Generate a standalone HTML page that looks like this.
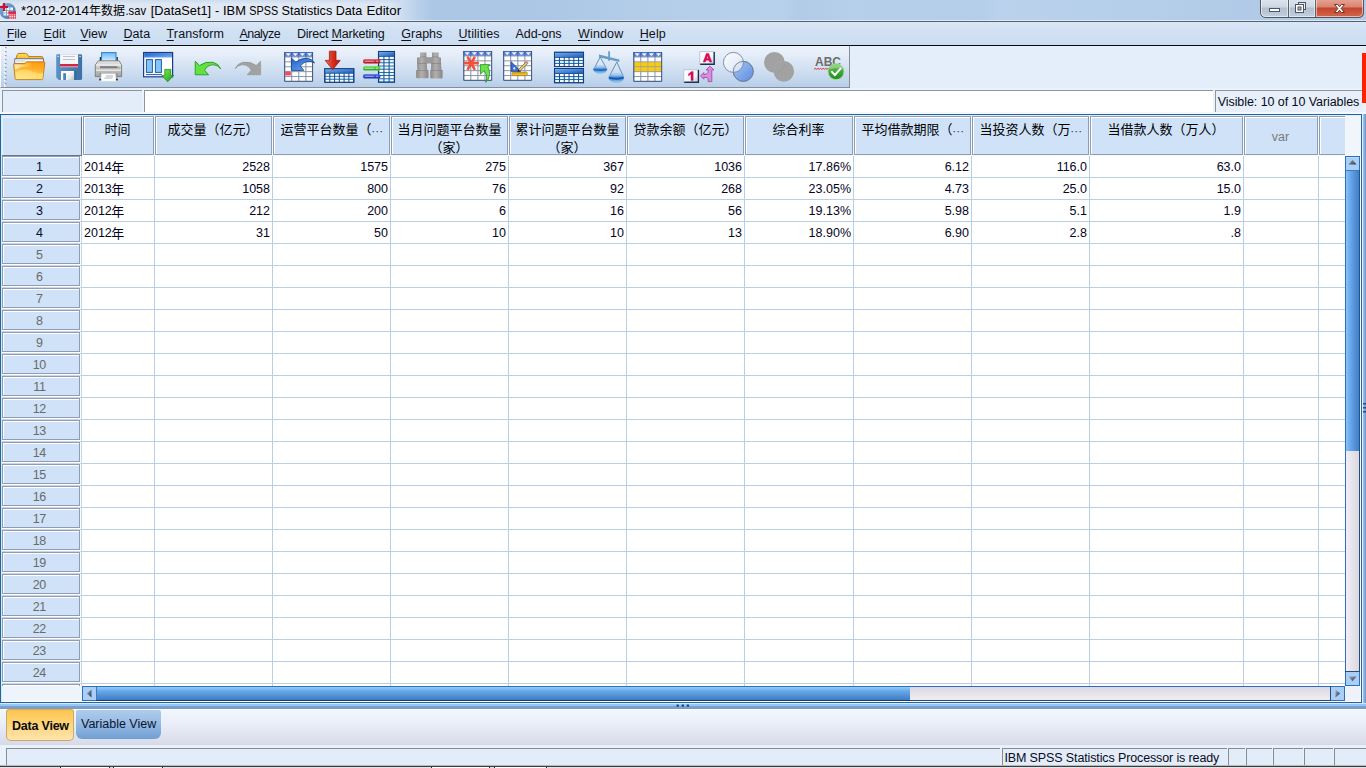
<!DOCTYPE html>
<html><head><meta charset="utf-8"><title>IBM SPSS Statistics Data Editor</title>
<style>
html,body{margin:0;padding:0}
body{width:1366px;height:768px;overflow:hidden;position:relative;background:#e6effa;
 font-family:"Liberation Sans",sans-serif;font-size:12.5px;color:#000;line-height:14px}
div{position:absolute;box-sizing:border-box}
.ov{position:absolute;left:0;top:0;pointer-events:none;font-family:"Liberation Sans",sans-serif;font-size:12.5px}
.ov text{white-space:pre}
.ov text.cj{font-family:"Liberation Sans","Noto Sans CJK SC",sans-serif}
.u{text-decoration:underline;text-decoration-thickness:1px;text-underline-offset:1.5px;text-decoration-skip-ink:none}
.hc{background:#cfe2f8;border:1px solid #8d9db3;box-shadow:inset 1px 1px 0 #fff}
.rh{background:#cfe2f8;border:1px solid #8d9db3;box-shadow:inset 1px 1px 0 #fff}

</style></head>
<body>
<svg width="0" height="0" style="position:absolute"><defs>
<linearGradient id="thv" x1="0" y1="0" x2="1" y2="0"><stop offset="0" stop-color="#86c4fb"/><stop offset=".35" stop-color="#6aa5e6"/><stop offset="1" stop-color="#3d7fc6"/></linearGradient>
<linearGradient id="thh" x1="0" y1="0" x2="0" y2="1"><stop offset="0" stop-color="#8fd0ff"/><stop offset=".3" stop-color="#6aa8e8"/><stop offset="1" stop-color="#3b7cc4"/></linearGradient>
<linearGradient id="trv" x1="0" y1="0" x2="1" y2="0"><stop offset="0" stop-color="#f1eff4"/><stop offset="1" stop-color="#dad7e1"/></linearGradient>
<linearGradient id="trh" x1="0" y1="0" x2="0" y2="1"><stop offset="0" stop-color="#dbd8e2"/><stop offset="1" stop-color="#efedf3"/></linearGradient>
<linearGradient id="arr" x1="0" y1="0" x2="1" y2="1"><stop offset="0" stop-color="#b0b0b0"/><stop offset="1" stop-color="#20324e"/></linearGradient>

<linearGradient id="gh" x1="0" y1="0" x2="0" y2="1"><stop offset="0" stop-color="#4468b8"/><stop offset="1" stop-color="#7a9ade"/></linearGradient>
<linearGradient id="bh" x1="0" y1="0" x2="1" y2="1"><stop offset="0" stop-color="#78b0ec"/><stop offset="1" stop-color="#1c5cbc"/></linearGradient>
<linearGradient id="fol1" x1="0" y1="0" x2="0" y2="1"><stop offset="0" stop-color="#ffe05a"/><stop offset="1" stop-color="#f0a818"/></linearGradient>
<linearGradient id="fol2" x1="0.700" y1="0" x2="0.400" y2="1"><stop offset="0" stop-color="#ff9810"/><stop offset=".45" stop-color="#ffb52e"/><stop offset="1" stop-color="#ffe880"/></linearGradient>
<linearGradient id="fol3" x1="0" y1="0" x2="1" y2="0"><stop offset="0" stop-color="#fff6d0" stop-opacity=".95"/><stop offset=".5" stop-color="#ffe9a0" stop-opacity=".5"/><stop offset="1" stop-color="#ffd060" stop-opacity="0"/></linearGradient>
<linearGradient id="shut" x1="0" y1="0" x2="1" y2="1"><stop offset="0" stop-color="#ffffff"/><stop offset=".5" stop-color="#ededed"/><stop offset="1" stop-color="#bdbdbd"/></linearGradient>
<linearGradient id="grn" x1="0" y1="0" x2="1" y2="1"><stop offset="0" stop-color="#7cf04e"/><stop offset="1" stop-color="#1f9c1f"/></linearGradient>
<linearGradient id="redg" x1="0" y1="0" x2="1" y2="0"><stop offset="0" stop-color="#f27058"/><stop offset=".5" stop-color="#d83020"/><stop offset="1" stop-color="#b81408"/></linearGradient>
<linearGradient id="blug" x1="0" y1="0" x2="1" y2="1"><stop offset="0" stop-color="#1d5fc8"/><stop offset="1" stop-color="#78b0f4"/></linearGradient>
<linearGradient id="pap" x1="0" y1="0" x2="0" y2="1"><stop offset="0" stop-color="#6cbaf4"/><stop offset="1" stop-color="#eef7fe"/></linearGradient>
<linearGradient id="prn" x1="0" y1="0" x2="0" y2="1"><stop offset="0" stop-color="#e4e4e4"/><stop offset=".5" stop-color="#c4c4c4"/><stop offset="1" stop-color="#a4a4a4"/></linearGradient>
<linearGradient id="venb" x1="0" y1="0" x2="1" y2="1"><stop offset="0" stop-color="#a8c4f2"/><stop offset="1" stop-color="#5a8ee4"/></linearGradient>
<linearGradient id="venw" x1="0" y1="0" x2="1" y2="1"><stop offset="0" stop-color="#ffffff"/><stop offset="1" stop-color="#d8e4f4"/></linearGradient>
<linearGradient id="chk" x1="0" y1="0" x2="0" y2="1"><stop offset="0" stop-color="#6cc45c"/><stop offset="1" stop-color="#1f8a1f"/></linearGradient>
<linearGradient id="boxg" x1="0" y1="0" x2="1" y2="1"><stop offset="0" stop-color="#ffffff"/><stop offset=".6" stop-color="#f4f7fb"/><stop offset="1" stop-color="#b9cbe2"/></linearGradient>
<linearGradient id="pan" x1="0" y1="0" x2="0" y2="1"><stop offset="0" stop-color="#d6ecfa"/><stop offset=".5" stop-color="#2a78d0"/><stop offset="1" stop-color="#9ed2f4"/></linearGradient>
<linearGradient id="flp" x1="0" y1="0" x2="1" y2="0"><stop offset="0" stop-color="#5a92c6"/><stop offset="1" stop-color="#3c70a6"/></linearGradient>
<linearGradient id="bin" x1="0" y1="0" x2="1" y2="0"><stop offset="0" stop-color="#8c8a88"/><stop offset=".45" stop-color="#b2b0ae"/><stop offset="1" stop-color="#8a8886"/></linearGradient></defs></svg>
<div style="left:0px;top:0px;width:1366px;height:21px;background:linear-gradient(90deg,#dde6f2 0,#e0e9f4 330px,#dce6f3 390px,#b9d0ea 418px,#abc7e5 432px,#abc7e5 540px,#b3cde9 640px,#b8d1eb 780px,#b1cbe8 800px,#b6cfea 850px,#b4cde9 980px,#bad2ec 1000px,#b5cee9 1150px,#b0cae7 1250px,#b3cce8 1366px)"></div>
<div style="left:0px;top:0px;width:400px;height:4px;background:linear-gradient(rgba(190,210,234,.55),rgba(190,210,234,0))"></div>
<div style="left:0px;top:20px;width:1366px;height:1px;background:rgba(236,243,252,.75)"></div>
<div style="left:0px;top:21px;width:1366px;height:1px;background:#56616e"></div>
<div style="left:0px;top:22px;width:1366px;height:23px;background:linear-gradient(#dae7f6 0,#d2e2f4 30%,#cbddf1 100%)"></div>
<div style="left:0px;top:45px;width:1366px;height:1px;background:#0a0a0a"></div>
<div style="left:0px;top:46px;width:850px;height:42px;background:linear-gradient(#edf3fb 0,#e3ecf8 25%,#cfdff1 60%,#b7cee9 100%);border-right:1px solid #878e98;border-bottom:1px solid #878e98;border-left:1px solid #fff"></div>
<div style="left:850px;top:46px;width:516px;height:42px;background:#e4eefb"></div>
<div style="left:0px;top:88px;width:1366px;height:26px;background:#eaf2fc"></div>
<div style="left:2px;top:90px;width:140px;height:22px;background:#e3edfa;border-top:1px solid #8f959d;border-left:1px solid #8f959d"></div>
<div style="left:144px;top:90px;width:1069px;height:22px;background:#fff;border-top:1px solid #8f959d;border-left:1px solid #8f959d"></div>
<div style="left:1215px;top:90px;width:147px;height:22px;background:#e6effa;border-top:1px solid #8f959d;border-left:1px solid #8f959d"></div>
<div style="left:0px;top:112px;width:1366px;height:2px;background:#f3f8fe"></div>
<div style="left:1362px;top:53px;width:4px;height:50px;background:#ff2200"></div>
<div style="left:0px;top:114px;width:1362px;height:589px;background:#fff;border:1px solid #2f6096"></div>
<div style="left:1px;top:115px;width:1360px;height:1px;background:#d6f0ff"></div>
<div style="left:1px;top:115px;width:1px;height:587px;background:#c8f1ff"></div>
<div style="left:1362px;top:114px;width:1px;height:590px;background:#dff1ff"></div>
<div style="left:1363px;top:114px;width:3px;height:594px;background:linear-gradient(90deg,#9cc4ee,#7ea9da 60%,#6a94c6)"></div>
<div style="left:0px;top:703px;width:1366px;height:1px;background:#c4ebff"></div>
<div style="left:0px;top:704px;width:1366px;height:5px;background:linear-gradient(#97c8fa 0,#93c4f7 38%,#7da2cd 44%,#7b9cc4 100%)"></div>
<div style="left:2px;top:116px;width:1343px;height:40px;background:#f6faff"></div>
<div style="left:2px;top:116px;width:80px;height:40px;background:#cfe2f8;border-right:1px solid #6c7684;border-bottom:1px solid #6c7684;border-top:1px solid #dbe9fa;box-shadow:inset 1px 1px 0 #e4f0fd"></div>
<div class="hc" style="left:83px;top:116px;width:71px;height:39px;"></div>
<div class="hc" style="left:155px;top:116px;width:117px;height:39px;"></div>
<div class="hc" style="left:273px;top:116px;width:117px;height:39px;"></div>
<div class="hc" style="left:391px;top:116px;width:117px;height:39px;"></div>
<div class="hc" style="left:509px;top:116px;width:117px;height:39px;"></div>
<div class="hc" style="left:627px;top:116px;width:117px;height:39px;"></div>
<div class="hc" style="left:745px;top:116px;width:108px;height:39px;"></div>
<div class="hc" style="left:854px;top:116px;width:117px;height:39px;"></div>
<div class="hc" style="left:972px;top:116px;width:117px;height:39px;"></div>
<div class="hc" style="left:1090px;top:116px;width:153px;height:39px;"></div>
<div class="hc" style="left:1244px;top:116px;width:74px;height:39px;"></div>
<div class="hc" style="left:1319px;top:116px;width:26px;height:39px;border-right:none"></div>
<div style="left:1345px;top:116px;width:16px;height:40px;background:#f1f6fc"></div>
<div style="left:154px;top:156px;width:1px;height:530px;background:#b9cee7"></div>
<div style="left:272px;top:156px;width:1px;height:530px;background:#b9cee7"></div>
<div style="left:390px;top:156px;width:1px;height:530px;background:#b9cee7"></div>
<div style="left:508px;top:156px;width:1px;height:530px;background:#b9cee7"></div>
<div style="left:626px;top:156px;width:1px;height:530px;background:#b9cee7"></div>
<div style="left:744px;top:156px;width:1px;height:530px;background:#b9cee7"></div>
<div style="left:853px;top:156px;width:1px;height:530px;background:#b9cee7"></div>
<div style="left:971px;top:156px;width:1px;height:530px;background:#b9cee7"></div>
<div style="left:1089px;top:156px;width:1px;height:530px;background:#b9cee7"></div>
<div style="left:1243px;top:156px;width:1px;height:530px;background:#b9cee7"></div>
<div style="left:1318px;top:156px;width:1px;height:530px;background:#b9cee7"></div>
<div style="left:82px;top:156px;width:1263px;height:530px;background:repeating-linear-gradient(180deg,transparent 0,transparent 21px,#b9cee7 21px,#b9cee7 22px)"></div>
<div style="left:81px;top:156px;width:1px;height:530px;background:#c6d6ea"></div>
<div style="left:2px;top:156px;width:79px;height:530px;background:repeating-linear-gradient(180deg,#fbfdff 0,#fbfdff 21px,#cfd6e0 21px,#cfd6e0 22px)"></div>
<div class="rh" style="left:2px;top:156px;width:78px;height:20px;"></div>
<div class="rh" style="left:2px;top:178px;width:78px;height:20px;"></div>
<div class="rh" style="left:2px;top:200px;width:78px;height:20px;"></div>
<div class="rh" style="left:2px;top:222px;width:78px;height:20px;"></div>
<div class="rh" style="left:2px;top:244px;width:78px;height:20px;"></div>
<div class="rh" style="left:2px;top:266px;width:78px;height:20px;"></div>
<div class="rh" style="left:2px;top:288px;width:78px;height:20px;"></div>
<div class="rh" style="left:2px;top:310px;width:78px;height:20px;"></div>
<div class="rh" style="left:2px;top:332px;width:78px;height:20px;"></div>
<div class="rh" style="left:2px;top:354px;width:78px;height:20px;"></div>
<div class="rh" style="left:2px;top:376px;width:78px;height:20px;"></div>
<div class="rh" style="left:2px;top:398px;width:78px;height:20px;"></div>
<div class="rh" style="left:2px;top:420px;width:78px;height:20px;"></div>
<div class="rh" style="left:2px;top:442px;width:78px;height:20px;"></div>
<div class="rh" style="left:2px;top:464px;width:78px;height:20px;"></div>
<div class="rh" style="left:2px;top:486px;width:78px;height:20px;"></div>
<div class="rh" style="left:2px;top:508px;width:78px;height:20px;"></div>
<div class="rh" style="left:2px;top:530px;width:78px;height:20px;"></div>
<div class="rh" style="left:2px;top:552px;width:78px;height:20px;"></div>
<div class="rh" style="left:2px;top:574px;width:78px;height:20px;"></div>
<div class="rh" style="left:2px;top:596px;width:78px;height:20px;"></div>
<div class="rh" style="left:2px;top:618px;width:78px;height:20px;"></div>
<div class="rh" style="left:2px;top:640px;width:78px;height:20px;"></div>
<div class="rh" style="left:2px;top:662px;width:78px;height:20px;"></div>
<div class="rh" style="left:2px;top:684px;width:78px;height:2px;border-bottom:none;"></div>
<div style="left:0px;top:709px;width:1366px;height:37px;background:linear-gradient(#ffffff 0,#f3f7fd 1px,#f1f5fc 2px,#eaeef8 40%,#dfe2ee 75%,#d6d8e6 100%)"></div>
<div style="left:6px;top:709px;width:68px;height:32px;background:linear-gradient(#fdc54e 0,#ffd272 40%,#ffe4ac 100%);border:1px solid #c6a96b;border-top-color:#d4ad5c;border-radius:3px 3px 5px 5px"></div>
<div style="left:76px;top:710px;width:85px;height:29px;background:linear-gradient(#aecbec 0,#9bbde4 40%,#6f9fd4 100%);border-radius:2px 2px 6px 6px"></div>
<div style="left:0px;top:745px;width:1366px;height:23px;background:#e9f1fb"></div>
<div style="left:6px;top:748px;width:994px;height:18px;background:#e3edfa;border-top:1px solid #868c94;border-left:1px solid #868c94"></div>
<div style="left:1002px;top:748px;width:225px;height:18px;background:#e3edfa;border-top:1px solid #868c94;border-left:1px solid #868c94"></div>
<div style="left:1228px;top:748px;width:17px;height:18px;background:#e3edfa;border-top:1px solid #868c94;border-left:1px solid #868c94"></div>
<div style="left:1246px;top:748px;width:26px;height:18px;background:#e3edfa;border-top:1px solid #868c94;border-left:1px solid #868c94"></div>
<div style="left:1273px;top:748px;width:30px;height:18px;background:#e3edfa;border-top:1px solid #868c94;border-left:1px solid #868c94"></div>
<div style="left:1304px;top:748px;width:29px;height:18px;background:#e3edfa;border-top:1px solid #868c94;border-left:1px solid #868c94"></div>
<div style="left:1334px;top:748px;width:32px;height:18px;background:#e3edfa;border-top:1px solid #868c94;border-left:1px solid #868c94"></div>
<div style="left:0px;top:765px;width:1366px;height:1px;background:#b4b9c0"></div>
<div style="left:0px;top:766px;width:1366px;height:1px;background:#3c3c3c"></div>
<div style="left:0px;top:767px;width:1366px;height:1px;background:#e4e4e4"></div>
<div style="left:60px;top:767px;width:50px;height:1px;background:#fff;border-left:1px solid #2a2a2a;border-right:1px solid #2a2a2a"></div>
<div style="left:113px;top:767px;width:50px;height:1px;background:#fff;border-left:1px solid #2a2a2a;border-right:1px solid #2a2a2a"></div>
<div style="left:431px;top:767px;width:59px;height:1px;background:#fff;border-left:1px solid #2a2a2a;border-right:1px solid #2a2a2a"></div>
<div style="left:494px;top:767px;width:53px;height:1px;background:#fff;border-left:1px solid #2a2a2a;border-right:1px solid #2a2a2a"></div>
<svg class="ov" width="1366" height="768" viewBox="0 0 1366 768">
<text x="21.0" y="15" font-size="12.6" fill="#000" textLength="67.90" lengthAdjust="spacingAndGlyphs">*2012-2014</text>
<text class="cj" x="88.9" y="15.1" font-size="12" fill="#000" textLength="36.2" lengthAdjust="spacing">年数据</text>
<text x="125.5" y="15" font-size="12.6" fill="#000" textLength="20.50" lengthAdjust="spacingAndGlyphs">.sav</text>
<text x="150.8" y="15" font-size="12.6" fill="#000" textLength="60.30" lengthAdjust="spacingAndGlyphs">[DataSet1]</text>
<text x="214.9" y="15" font-size="12.6" fill="#000">-</text>
<text x="223.0" y="15" font-size="12.6" fill="#000" textLength="22.90" lengthAdjust="spacingAndGlyphs">IBM</text>
<text x="249.3" y="15" font-size="12.6" fill="#000" textLength="28.80" lengthAdjust="spacingAndGlyphs">SPSS</text>
<text x="281.5" y="15" font-size="12.6" fill="#000" textLength="50.80" lengthAdjust="spacingAndGlyphs">Statistics</text>
<text x="335.7" y="15" font-size="12.6" fill="#000" textLength="26.60" lengthAdjust="spacingAndGlyphs">Data</text>
<text x="366.4" y="15" font-size="12.6" fill="#000" textLength="34.70" lengthAdjust="spacingAndGlyphs">Editor</text>

<defs>
<linearGradient id="wbg" x1="0" y1="0" x2="0" y2="1"><stop offset="0" stop-color="#dfe6ef"/><stop offset=".45" stop-color="#cdd7e3"/><stop offset=".5" stop-color="#b2bfcf"/><stop offset="1" stop-color="#c3d0df"/></linearGradient>
<linearGradient id="wbr" x1="0" y1="0" x2="0" y2="1"><stop offset="0" stop-color="#e9a99a"/><stop offset=".45" stop-color="#d98370"/><stop offset=".5" stop-color="#c4452d"/><stop offset="1" stop-color="#d6694f"/></linearGradient>
<clipPath id="wbc"><path d="M1260 -2H1364V12Q1364 18 1358 18H1266Q1260 18 1260 12Z"/></clipPath>
</defs>
<g clip-path="url(#wbc)">
<rect x="1260" y="-2" width="56" height="20" fill="url(#wbg)"/>
<rect x="1315" y="-2" width="49" height="20" fill="url(#wbr)"/>
</g>
<path d="M1260.5 -2V12Q1260.5 17.5 1266 17.5H1358Q1363.5 17.5 1363.5 12V-2" fill="none" stroke="#4e5663" stroke-width="1"/>
<path d="M1261.5 -2V12Q1261.5 16.5 1266 16.5H1358Q1362.5 16.5 1362.5 12V-2" fill="none" stroke="rgba(255,255,255,.55)" stroke-width="1"/>
<path d="M1288.5 0V17M1315.5 0V17" stroke="#5a626e" stroke-width="1"/>
<path d="M1289.5 0V16M1287.5 0V16M1314.5 0V16M1316.5 0V16" stroke="rgba(255,255,255,.5)" stroke-width="1"/>
<rect x="1269.5" y="8.5" width="10" height="3" fill="#fff" stroke="#4c5562" stroke-width="1"/>
<g fill="none" stroke="#4c5562">
<rect x="1298.5" y="2.5" width="7" height="7" fill="#e9eef4"/>
<rect x="1295.5" y="4.500" width="8" height="8" fill="#fff"/>
<rect x="1298" y="7" width="3" height="3" fill="#aab6c5" stroke-width="1"/>
</g>
<path d="M1334.500 4.5h3.2l1.800 2.3 1.800-2.300h3.200l-3.400 4 3.400 4h-3.200l-1.800-2.300-1.800 2.300h-3.200l3.400-4z" fill="#fff" stroke="#5c2a22" stroke-width=".9" stroke-linejoin="round"/>


<defs><linearGradient id="aic" x1="0" y1="0" x2="1" y2="1"><stop offset="0" stop-color="#86b4dc"/><stop offset="1" stop-color="#3d6fa8"/></linearGradient></defs>
<circle cx="7.6" cy="11" r="8.100" fill="url(#aic)"/>
<rect x="3.5" y="7.5" width="9.5" height="8" fill="#f4f8fc"/>
<path d="M3.5 10.500h9.500M3.500 13h9.500M6.500 7.500v8M9.700 7.500v8" stroke="#6d95c4" stroke-width=".8"/>
<path d="M4 3v8M0 7h8" stroke="#d0102c" stroke-width="2.200"/>
<rect x="8.500" y="11.500" width="7.500" height="7.500" fill="#e0405a"/>
<rect x="8.500" y="11.500" width="7.500" height="2" fill="#d02848"/>
<path d="M9.300 14.900h6M9.300 16.500h6M9.300 18.100h6" stroke="#fff" stroke-width=".9" stroke-dasharray="1.500 .75"/>

<text x="6.7" y="38" font-size="12.5" fill="#101018" textLength="20.00" lengthAdjust="spacing">File</text>
<text x="43.6" y="38" font-size="12.5" fill="#101018" textLength="21.90" lengthAdjust="spacing">Edit</text>
<text x="80.2" y="38" font-size="12.5" fill="#101018" textLength="26.80" lengthAdjust="spacing">View</text>
<text x="123.5" y="38" font-size="12.5" fill="#101018" textLength="26.60" lengthAdjust="spacing">Data</text>
<text x="166.6" y="38" font-size="12.5" fill="#101018" textLength="57.30" lengthAdjust="spacing">Transform</text>
<text x="239.5" y="38" font-size="12.5" fill="#101018" textLength="41.20" lengthAdjust="spacing">Analyze</text>
<text x="296.9" y="38" font-size="12.5" fill="#101018" textLength="87.80" lengthAdjust="spacing">Direct Marketing</text>
<text x="401.3" y="38" font-size="12.5" fill="#101018" textLength="41.00" lengthAdjust="spacing">Graphs</text>
<text x="458.5" y="38" font-size="12.5" fill="#101018" textLength="40.90" lengthAdjust="spacing">Utilities</text>
<text x="515.6" y="38" font-size="12.5" fill="#101018" textLength="45.90" lengthAdjust="spacing">Add-ons</text>
<text x="578.0" y="38" font-size="12.5" fill="#101018" textLength="45.20" lengthAdjust="spacing">Window</text>
<text x="639.7" y="38" font-size="12.5" fill="#101018" textLength="26.10" lengthAdjust="spacing">Help</text>
<rect x="5" y="47" width="1.500" height="1.500" fill="#8c9cb4"/><rect x="4" y="48" width="1.500" height="1.500" fill="#fff"/><rect x="5" y="51" width="1.500" height="1.500" fill="#8c9cb4"/><rect x="4" y="52" width="1.500" height="1.500" fill="#fff"/><rect x="5" y="55" width="1.500" height="1.500" fill="#8c9cb4"/><rect x="4" y="56" width="1.500" height="1.500" fill="#fff"/><rect x="5" y="59" width="1.500" height="1.500" fill="#8c9cb4"/><rect x="4" y="60" width="1.500" height="1.500" fill="#fff"/><rect x="5" y="63" width="1.500" height="1.500" fill="#8c9cb4"/><rect x="4" y="64" width="1.500" height="1.500" fill="#fff"/><rect x="5" y="67" width="1.500" height="1.500" fill="#8c9cb4"/><rect x="4" y="68" width="1.500" height="1.500" fill="#fff"/><rect x="5" y="71" width="1.500" height="1.500" fill="#8c9cb4"/><rect x="4" y="72" width="1.500" height="1.500" fill="#fff"/><rect x="5" y="75" width="1.500" height="1.500" fill="#8c9cb4"/><rect x="4" y="76" width="1.500" height="1.500" fill="#fff"/><rect x="5" y="79" width="1.500" height="1.500" fill="#8c9cb4"/><rect x="4" y="80" width="1.500" height="1.500" fill="#fff"/><rect x="5" y="83" width="1.500" height="1.500" fill="#8c9cb4"/><rect x="4" y="84" width="1.500" height="1.500" fill="#fff"/><rect x="4" y="86" width="1.500" height="1" fill="#fff"/>
<text x="1217.7" y="106" font-size="12.5" fill="#0a0a20" textLength="141.60" lengthAdjust="spacing">Visible: 10 of 10 Variables</text>
<g fill="#2a4f86"><rect x="1363" y="403" width="3" height="1.5"/><rect x="1363" y="407" width="3" height="1.5"/><rect x="1363" y="411" width="3" height="1.5"/></g>
<g fill="#1c3c78"><rect x="676.500" y="704.600" width="2.400" height="2.200" rx=".8"/><rect x="681.600" y="704.600" width="2.400" height="2.200" rx=".8"/><rect x="686.700" y="704.600" width="2.400" height="2.200" rx=".8"/></g>
<text x="39.5" y="171" font-size="12.5" fill="#0a0a32" text-anchor="middle">1</text>
<text x="39.5" y="193" font-size="12.5" fill="#0a0a32" text-anchor="middle">2</text>
<text x="39.5" y="215" font-size="12.5" fill="#0a0a32" text-anchor="middle">3</text>
<text x="39.5" y="237" font-size="12.5" fill="#0a0a32" text-anchor="middle">4</text>
<text x="39.5" y="259" font-size="12.5" fill="#6a6a6a" text-anchor="middle">5</text>
<text x="39.5" y="281" font-size="12.5" fill="#6a6a6a" text-anchor="middle">6</text>
<text x="39.5" y="303" font-size="12.5" fill="#6a6a6a" text-anchor="middle">7</text>
<text x="39.5" y="325" font-size="12.5" fill="#6a6a6a" text-anchor="middle">8</text>
<text x="39.5" y="347" font-size="12.5" fill="#6a6a6a" text-anchor="middle">9</text>
<text x="39.5" y="369" font-size="12.5" fill="#6a6a6a" text-anchor="middle" textLength="13.61" lengthAdjust="spacing">10</text>
<text x="39.5" y="391" font-size="12.5" fill="#6a6a6a" text-anchor="middle" textLength="12.68" lengthAdjust="spacing">11</text>
<text x="39.5" y="413" font-size="12.5" fill="#6a6a6a" text-anchor="middle" textLength="13.61" lengthAdjust="spacing">12</text>
<text x="39.5" y="435" font-size="12.5" fill="#6a6a6a" text-anchor="middle" textLength="13.61" lengthAdjust="spacing">13</text>
<text x="39.5" y="457" font-size="12.5" fill="#6a6a6a" text-anchor="middle" textLength="13.61" lengthAdjust="spacing">14</text>
<text x="39.5" y="479" font-size="12.5" fill="#6a6a6a" text-anchor="middle" textLength="13.61" lengthAdjust="spacing">15</text>
<text x="39.5" y="501" font-size="12.5" fill="#6a6a6a" text-anchor="middle" textLength="13.61" lengthAdjust="spacing">16</text>
<text x="39.5" y="523" font-size="12.5" fill="#6a6a6a" text-anchor="middle" textLength="13.61" lengthAdjust="spacing">17</text>
<text x="39.5" y="545" font-size="12.5" fill="#6a6a6a" text-anchor="middle" textLength="13.61" lengthAdjust="spacing">18</text>
<text x="39.5" y="567" font-size="12.5" fill="#6a6a6a" text-anchor="middle" textLength="13.61" lengthAdjust="spacing">19</text>
<text x="39.5" y="589" font-size="12.5" fill="#6a6a6a" text-anchor="middle" textLength="13.61" lengthAdjust="spacing">20</text>
<text x="39.5" y="611" font-size="12.5" fill="#6a6a6a" text-anchor="middle" textLength="13.61" lengthAdjust="spacing">21</text>
<text x="39.5" y="633" font-size="12.5" fill="#6a6a6a" text-anchor="middle" textLength="13.61" lengthAdjust="spacing">22</text>
<text x="39.5" y="655" font-size="12.5" fill="#6a6a6a" text-anchor="middle" textLength="13.61" lengthAdjust="spacing">23</text>
<text x="39.5" y="677" font-size="12.5" fill="#6a6a6a" text-anchor="middle" textLength="13.61" lengthAdjust="spacing">24</text>
<text class="cj" x="104.5" y="134.2" font-size="13" fill="#000" textLength="26" lengthAdjust="spacing">时间</text>
<text class="cj" x="167.5" y="134.2" font-size="13" fill="#000" textLength="91" lengthAdjust="spacing">成交量（亿元）</text>
<text class="cj" x="280.5" y="134.2" font-size="13" fill="#000" textLength="91" lengthAdjust="spacing">运营平台数量（</text>
<g fill="#55657e"><rect x="372.5" y="131" width="1.6" height="1.2"/><rect x="376.5" y="131" width="1.6" height="1.2"/><rect x="380.5" y="131" width="1.6" height="1.2"/></g>
<text class="cj" x="397.5" y="134.2" font-size="13" fill="#000" textLength="104" lengthAdjust="spacing">当月问题平台数量</text>
<text class="cj" x="429.5" y="152.3" font-size="13" fill="#000" textLength="39" lengthAdjust="spacing">（家）</text>
<text class="cj" x="515.5" y="134.2" font-size="13" fill="#000" textLength="104" lengthAdjust="spacing">累计问题平台数量</text>
<text class="cj" x="547.5" y="152.3" font-size="13" fill="#000" textLength="39" lengthAdjust="spacing">（家）</text>
<text class="cj" x="633.5" y="134.2" font-size="13" fill="#000" textLength="104" lengthAdjust="spacing">贷款余额（亿元）</text>
<text class="cj" x="772.5" y="134.2" font-size="13" fill="#000" textLength="52" lengthAdjust="spacing">综合利率</text>
<text class="cj" x="861.5" y="134.2" font-size="13" fill="#000" textLength="91" lengthAdjust="spacing">平均借款期限（</text>
<g fill="#55657e"><rect x="953.5" y="131" width="1.6" height="1.2"/><rect x="957.5" y="131" width="1.6" height="1.2"/><rect x="961.5" y="131" width="1.6" height="1.2"/></g>
<text class="cj" x="979.5" y="134.2" font-size="13" fill="#000" textLength="91" lengthAdjust="spacing">当投资人数（万</text>
<g fill="#55657e"><rect x="1071.5" y="131" width="1.6" height="1.2"/><rect x="1075.5" y="131" width="1.6" height="1.2"/><rect x="1079.5" y="131" width="1.6" height="1.2"/></g>
<text class="cj" x="1107.5" y="134.2" font-size="13" fill="#000" textLength="117" lengthAdjust="spacing">当借款人数（万人）</text>
<text x="1280.5" y="141" font-size="12.5" fill="#7a7a7a" text-anchor="middle" textLength="17.38" lengthAdjust="spacing">var</text>
<text x="84" y="171" font-size="12.5" fill="#05051e" textLength="27.81" lengthAdjust="spacing">2014</text>
<text class="cj" x="111.3" y="171.7" font-size="13" fill="#05051e">年</text>
<text x="270" y="171" font-size="12.5" fill="#05051e" text-anchor="end" textLength="27.81" lengthAdjust="spacing">2528</text>
<text x="388" y="171" font-size="12.5" fill="#05051e" text-anchor="end" textLength="27.81" lengthAdjust="spacing">1575</text>
<text x="506" y="171" font-size="12.5" fill="#05051e" text-anchor="end" textLength="20.86" lengthAdjust="spacing">275</text>
<text x="624" y="171" font-size="12.5" fill="#05051e" text-anchor="end" textLength="20.86" lengthAdjust="spacing">367</text>
<text x="742" y="171" font-size="12.5" fill="#05051e" text-anchor="end" textLength="27.81" lengthAdjust="spacing">1036</text>
<text x="851" y="171" font-size="12.5" fill="#05051e" text-anchor="end" textLength="42.41" lengthAdjust="spacing">17.86%</text>
<text x="969" y="171" font-size="12.5" fill="#05051e" text-anchor="end" textLength="24.34" lengthAdjust="spacing">6.12</text>
<text x="1087" y="171" font-size="12.5" fill="#05051e" text-anchor="end" textLength="30.36" lengthAdjust="spacing">116.0</text>
<text x="1241" y="171" font-size="12.5" fill="#05051e" text-anchor="end" textLength="24.34" lengthAdjust="spacing">63.0</text>
<text x="84" y="193" font-size="12.5" fill="#05051e" textLength="27.81" lengthAdjust="spacing">2013</text>
<text class="cj" x="111.3" y="193.7" font-size="13" fill="#05051e">年</text>
<text x="270" y="193" font-size="12.5" fill="#05051e" text-anchor="end" textLength="27.81" lengthAdjust="spacing">1058</text>
<text x="388" y="193" font-size="12.5" fill="#05051e" text-anchor="end" textLength="20.86" lengthAdjust="spacing">800</text>
<text x="506" y="193" font-size="12.5" fill="#05051e" text-anchor="end" textLength="13.91" lengthAdjust="spacing">76</text>
<text x="624" y="193" font-size="12.5" fill="#05051e" text-anchor="end" textLength="13.91" lengthAdjust="spacing">92</text>
<text x="742" y="193" font-size="12.5" fill="#05051e" text-anchor="end" textLength="20.86" lengthAdjust="spacing">268</text>
<text x="851" y="193" font-size="12.5" fill="#05051e" text-anchor="end" textLength="42.41" lengthAdjust="spacing">23.05%</text>
<text x="969" y="193" font-size="12.5" fill="#05051e" text-anchor="end" textLength="24.34" lengthAdjust="spacing">4.73</text>
<text x="1087" y="193" font-size="12.5" fill="#05051e" text-anchor="end" textLength="24.34" lengthAdjust="spacing">25.0</text>
<text x="1241" y="193" font-size="12.5" fill="#05051e" text-anchor="end" textLength="24.34" lengthAdjust="spacing">15.0</text>
<text x="84" y="215" font-size="12.5" fill="#05051e" textLength="27.81" lengthAdjust="spacing">2012</text>
<text class="cj" x="111.3" y="215.7" font-size="13" fill="#05051e">年</text>
<text x="270" y="215" font-size="12.5" fill="#05051e" text-anchor="end" textLength="20.86" lengthAdjust="spacing">212</text>
<text x="388" y="215" font-size="12.5" fill="#05051e" text-anchor="end" textLength="20.86" lengthAdjust="spacing">200</text>
<text x="506" y="215" font-size="12.5" fill="#05051e" text-anchor="end">6</text>
<text x="624" y="215" font-size="12.5" fill="#05051e" text-anchor="end" textLength="13.91" lengthAdjust="spacing">16</text>
<text x="742" y="215" font-size="12.5" fill="#05051e" text-anchor="end" textLength="13.91" lengthAdjust="spacing">56</text>
<text x="851" y="215" font-size="12.5" fill="#05051e" text-anchor="end" textLength="42.41" lengthAdjust="spacing">19.13%</text>
<text x="969" y="215" font-size="12.5" fill="#05051e" text-anchor="end" textLength="24.34" lengthAdjust="spacing">5.98</text>
<text x="1087" y="215" font-size="12.5" fill="#05051e" text-anchor="end" textLength="17.39" lengthAdjust="spacing">5.1</text>
<text x="1241" y="215" font-size="12.5" fill="#05051e" text-anchor="end" textLength="17.39" lengthAdjust="spacing">1.9</text>
<text x="84" y="237" font-size="12.5" fill="#05051e" textLength="27.81" lengthAdjust="spacing">2012</text>
<text class="cj" x="111.3" y="237.7" font-size="13" fill="#05051e">年</text>
<text x="270" y="237" font-size="12.5" fill="#05051e" text-anchor="end" textLength="13.91" lengthAdjust="spacing">31</text>
<text x="388" y="237" font-size="12.5" fill="#05051e" text-anchor="end" textLength="13.91" lengthAdjust="spacing">50</text>
<text x="506" y="237" font-size="12.5" fill="#05051e" text-anchor="end" textLength="13.91" lengthAdjust="spacing">10</text>
<text x="624" y="237" font-size="12.5" fill="#05051e" text-anchor="end" textLength="13.91" lengthAdjust="spacing">10</text>
<text x="742" y="237" font-size="12.5" fill="#05051e" text-anchor="end" textLength="13.91" lengthAdjust="spacing">13</text>
<text x="851" y="237" font-size="12.5" fill="#05051e" text-anchor="end" textLength="42.41" lengthAdjust="spacing">18.90%</text>
<text x="969" y="237" font-size="12.5" fill="#05051e" text-anchor="end" textLength="24.34" lengthAdjust="spacing">6.90</text>
<text x="1087" y="237" font-size="12.5" fill="#05051e" text-anchor="end" textLength="17.39" lengthAdjust="spacing">2.8</text>
<text x="1241" y="237" font-size="12.5" fill="#05051e" text-anchor="end" textLength="10.44" lengthAdjust="spacing">.8</text>

<!-- vertical scrollbar -->
<rect x="1345" y="156" width="15" height="530" fill="#2f6fb8"/>
<rect x="1346" y="157" width="13" height="13" fill="#a9cff8"/>
<rect x="1346" y="157" width="13" height="1" fill="#b9dcff"/>
<path d="M1348.500 164.500L1352.500 159.800L1356.500 164.500Z" fill="url(#arr)"/>
<rect x="1346" y="170" width="13" height="281" fill="url(#thv)"/>
<rect x="1345" y="170" width="15" height="1" fill="#3a7cc4"/>
<rect x="1359" y="170" width="1" height="281" fill="#1f5596"/>
<rect x="1346" y="451" width="13" height="221" fill="url(#trv)"/>
<rect x="1359" y="451" width="1" height="221" fill="#254c78"/>
<rect x="1345" y="671" width="15" height="1" fill="#1f4e86"/>
<rect x="1346" y="672" width="13" height="13" fill="#a9cff8"/>
<path d="M1348.500 676.500L1352.500 681.200L1356.500 676.500Z" fill="url(#arr)"/>
<rect x="1345" y="685" width="15" height="1" fill="#2f6fb8"/>
<rect x="1360" y="156" width="1" height="546" fill="#fff"/>
<!-- horizontal scrollbar -->
<rect x="2" y="686" width="80" height="16" fill="#eef4fc"/>
<rect x="82" y="686" width="1263" height="15" fill="#2f6fb8"/>
<rect x="83" y="687" width="13" height="13" fill="#a9cff8"/>
<path d="M91.500 689.500L86.800 693.500L91.500 697.500Z" fill="url(#arr)"/>
<rect x="96" y="687" width="814" height="13" fill="url(#thh)"/>
<rect x="96" y="687" width="1" height="13" fill="#3a7cc4"/>
<rect x="96" y="700" width="814" height="1" fill="#163f74"/>
<rect x="910" y="687" width="420" height="13" fill="url(#trh)"/>
<rect x="910" y="700" width="420" height="1" fill="#2a4866"/>
<rect x="1330" y="686" width="1" height="15" fill="#1f4e86"/>
<rect x="1331" y="687" width="13" height="13" fill="#a9cff8"/>
<path d="M1335.500 689.500L1340.200 693.500L1335.500 697.500Z" fill="url(#arr)"/>
<rect x="1344" y="686" width="1" height="15" fill="#2f6fb8"/>
<rect x="1345" y="686" width="15" height="16" fill="#eef3fb"/>
<rect x="2" y="701" width="1358" height="1" fill="#fff"/>


<path d="M15.3 60.500L17.300 54.600Q17.800 53.400 19 53.400H25.600Q26.800 53.400 27.400 54.400L28.600 56.600H41.800Q42.800 56.600 42.800 57.600V62H15.300Z" fill="url(#fol1)" stroke="#b46c12" stroke-width=".9"/>
<rect x="14.8" y="58.800" width="28.600" height="5.200" fill="#fbfbfb" stroke="#3d56a6" stroke-width=".8"/>
<rect x="15.5" y="59.500" width="10" height="2.800" fill="#dfe3ea"/>
<path d="M13.6 64.400Q13.400 63.500 14.400 63.500H24.800L26.400 61.800H44Q45 61.800 44.900 62.800L42.800 78.700Q42.700 79.600 41.700 79.600H16.200Q15.200 79.600 15.100 78.700Z" fill="url(#fol2)" stroke="#c47c14" stroke-width=".9"/>
<path d="M14.500 64.400H25.200L26.800 62.700H35L30 66.500Q22 66 15.200 69.500Z" fill="url(#fol3)"/>
<path d="M15.600 72.500Q22 67.500 30 70.500Q37 74 43.300 73L42.600 78.600H16.300Z" fill="#ffec94" opacity=".5"/>


<path d="M57.5 54.200H80.700Q82.100 54.200 82.100 55.600V78.600Q82.100 80 80.700 80H58.800L56.200 77.600V55.600Q56.200 54.200 57.500 54.200Z" fill="url(#flp)"/>
<rect x="60.1" y="54.200" width="18" height="10" fill="#f4f6f9"/>
<path d="M63 56.500h12M63 59.500h12" stroke="#b9bec6" stroke-width=".9"/>
<rect x="60.1" y="64" width="18" height="2.200" fill="#cc2848"/>
<rect x="60.1" y="66.200" width="18" height="1.200" fill="#e898a8"/>
<rect x="57.4" y="55.800" width="1.500" height="1.300" fill="#cfe0f0"/><rect x="79.3" y="55.800" width="1.500" height="1.300" fill="#cfe0f0"/>
<rect x="61" y="71" width="13.200" height="9" fill="#fbfbfb"/>
<rect x="66.500" y="72" width="7.700" height="8" fill="url(#shut)"/>
<rect x="63.2" y="73.200" width="2.800" height="6.800" fill="#4a82b8"/>
<rect x="74.2" y="71" width="2.200" height="9" fill="#356a9e"/>


<rect x="101.6" y="52.600" width="14.400" height="10.400" fill="url(#pap)" stroke="#2680c8" stroke-width="1"/>
<path d="M100.400 57v5M117.200 57v5" stroke="#23334a" stroke-width="1.300"/>
<path d="M98.400 60.800H119.200L121.600 65V76.600H95.300V65Z" fill="url(#prn)" stroke="#6f6f6f" stroke-width=".8"/>
<rect x="96" y="64.400" width="25" height="1.200" fill="#f2f2f2"/>
<rect x="100" y="66.200" width="17.500" height="2" fill="#7d7d7d"/>
<rect x="118.300" y="67" width="1.800" height="1.300" fill="#6fd060"/>
<rect x="96" y="69.600" width="25" height="1.300" fill="#ececec"/>
<path d="M99.600 73.200H117.400V79.400H99.600Z" fill="#8e8e8e"/>
<path d="M101.300 73.600H115.600L116.400 81.400H100.500Z" fill="#fafcfe" stroke="#c8ccd2" stroke-width=".6"/>
<path d="M106 76h7M104.500 78h8" stroke="#a8acb4" stroke-width=".9"/>
<rect x="99.300" y="78.800" width="1.800" height="1.600" fill="#2a2a2a"/><rect x="116" y="78.800" width="1.800" height="1.600" fill="#2a2a2a"/>


<rect x="143.600" y="52.500" width="29" height="24.300" fill="#fff" stroke="#1c3a8a" stroke-width="1.200"/>
<rect x="144.200" y="53.100" width="27.800" height="4.400" fill="url(#blug)"/>
<rect x="146.400" y="59.600" width="6" height="12.800" fill="#84c6f2" stroke="#1c5cae" stroke-width="1"/>
<rect x="155.400" y="59.600" width="6" height="12.800" fill="#84c6f2" stroke="#1c5cae" stroke-width="1"/>
<path d="M146 74.600h16" stroke="#1c5cae" stroke-width="1"/>
<path d="M164.800 69.400H170.800V75.400H173.600L167.700 81.800L161.900 75.400H164.800Z" fill="url(#grn)" stroke="#1c8a1c" stroke-width=".8" stroke-linejoin="round"/>

<path d="M195.200 61.200V74.800H208.600L204.600 70.300Q207.300 64.800 213.600 64.800Q217.800 65.200 220.800 68.800Q218.400 63.600 213.200 62.300Q205.600 61 199.600 65.500Z" fill="#62e23e" stroke="#1c9020" stroke-width=".8" stroke-linejoin="round"/>
<g transform="translate(455.800 0) scale(-1 1)"><path d="M195.200 61.200V74.800H208.600L204.600 70.300Q207.300 64.800 213.600 64.800Q217.800 65.200 220.800 68.800Q218.400 63.600 213.200 62.300Q205.600 61 199.600 65.500Z" fill="#a2a2a2" stroke="#8e8e8e" stroke-width=".6" stroke-linejoin="round"/></g>
<rect x="284.3" y="52" width="28.6" height="29.5" fill="#8a95aa"/><rect x="284.3" y="52" width="28.6" height="5.0" fill="url(#gh)"/><path d="M285.6 53.3h5.2l-2.600 2.800z" fill="#f4f8ff"/><path d="M292.7 53.3h5.2l-2.600 2.800z" fill="#f4f8ff"/><rect x="291.3" y="52" width=".8" height="5.0" fill="#3c5cae"/><path d="M299.8 53.3h5.2l-2.600 2.800z" fill="#f4f8ff"/><rect x="298.4" y="52" width=".8" height="5.0" fill="#3c5cae"/><path d="M306.9 53.3h5.2l-2.600 2.800z" fill="#f4f8ff"/><rect x="305.5" y="52" width=".8" height="5.0" fill="#3c5cae"/><rect x="285.10" y="57.45" width="6.05" height="3.90" fill="#fff"/><rect x="292.20" y="57.45" width="6.05" height="3.90" fill="#fff"/><rect x="299.30" y="57.45" width="6.05" height="3.90" fill="#fff"/><rect x="306.40" y="57.45" width="6.05" height="3.90" fill="#fff"/><rect x="285.10" y="62.35" width="6.05" height="3.90" fill="#fff"/><rect x="292.20" y="62.35" width="6.05" height="3.90" fill="#fff"/><rect x="299.30" y="62.35" width="6.05" height="3.90" fill="#fff"/><rect x="306.40" y="62.35" width="6.05" height="3.90" fill="#fff"/><rect x="285.10" y="67.25" width="6.05" height="3.90" fill="#fff"/><rect x="292.20" y="67.25" width="6.05" height="3.90" fill="#fff"/><rect x="299.30" y="67.25" width="6.05" height="3.90" fill="#fff"/><rect x="306.40" y="67.25" width="6.05" height="3.90" fill="#fff"/><rect x="285.10" y="72.15" width="6.05" height="3.90" fill="#fff"/><rect x="292.20" y="72.15" width="6.05" height="3.90" fill="#fff"/><rect x="299.30" y="72.15" width="6.05" height="3.90" fill="#fff"/><rect x="306.40" y="72.15" width="6.05" height="3.90" fill="#fff"/><rect x="285.10" y="77.05" width="6.05" height="3.90" fill="#fff"/><rect x="292.20" y="77.05" width="6.05" height="3.90" fill="#fff"/><rect x="299.30" y="77.05" width="6.05" height="3.90" fill="#fff"/><rect x="306.40" y="77.05" width="6.05" height="3.90" fill="#fff"/><path d="M284.7 52V81.3H312.6V52" fill="none" stroke="#3c557e" stroke-width="1"/>
<rect x="285.100" y="71.500" width="5.800" height="4.100" rx="1.200" fill="#f04a64"/>
<path d="M291.400 58V70.400H303.800L300.400 66.200Q303.500 61.500 309 61.300Q312.200 61.300 314.600 63Q312.400 58.900 307.200 58.300Q300.600 57.900 295.800 62.200Z" fill="url(#blug)" stroke="#143c8c" stroke-width=".8" stroke-linejoin="round"/>
<rect x="324.3" y="68.3" width="30" height="14.45" fill="#1a5098"/><rect x="325.1" y="69.1" width="28.4" height="3.8" fill="url(#bh)"/><rect x="325.55" y="73.75" width="3.72" height="2.1" fill="#fff"/><rect x="330.32" y="73.75" width="3.72" height="2.1" fill="#fff"/><rect x="335.08" y="73.75" width="3.72" height="2.1" fill="#fff"/><rect x="339.85" y="73.75" width="3.72" height="2.1" fill="#fff"/><rect x="344.62" y="73.75" width="3.72" height="2.1" fill="#fff"/><rect x="349.38" y="73.75" width="3.72" height="2.1" fill="#fff"/><rect x="325.55" y="76.70" width="3.72" height="2.1" fill="#d4fbff"/><rect x="330.32" y="76.70" width="3.72" height="2.1" fill="#d4fbff"/><rect x="335.08" y="76.70" width="3.72" height="2.1" fill="#d4fbff"/><rect x="339.85" y="76.70" width="3.72" height="2.1" fill="#d4fbff"/><rect x="344.62" y="76.70" width="3.72" height="2.1" fill="#d4fbff"/><rect x="349.38" y="76.70" width="3.72" height="2.1" fill="#d4fbff"/><rect x="325.55" y="79.65" width="3.72" height="2.1" fill="#fff"/><rect x="330.32" y="79.65" width="3.72" height="2.1" fill="#fff"/><rect x="335.08" y="79.65" width="3.72" height="2.1" fill="#fff"/><rect x="339.85" y="79.65" width="3.72" height="2.1" fill="#fff"/><rect x="344.62" y="79.65" width="3.72" height="2.1" fill="#fff"/><rect x="349.38" y="79.65" width="3.72" height="2.1" fill="#fff"/><rect x="324.7" y="68.7" width="29.2" height="13.65" fill="none" stroke="#123c7c" stroke-width=".9"/>
<path d="M329.400 51.200H336V60.400H340.200L332.700 69.600L325.200 60.400H329.400Z" fill="url(#redg)" stroke="#a01810" stroke-width=".8" stroke-linejoin="round"/>
<rect x="378" y="51" width="17" height="31.60" fill="#1a5098"/><rect x="378.8" y="51.8" width="15.4" height="4.2" fill="url(#bh)"/><rect x="379.25" y="56.85" width="4.15" height="2.3" fill="#fff"/><rect x="384.45" y="56.85" width="4.15" height="2.3" fill="#fff"/><rect x="389.65" y="56.85" width="4.15" height="2.3" fill="#fff"/><rect x="379.25" y="60.05" width="4.15" height="2.3" fill="#d4fbff"/><rect x="384.45" y="60.05" width="4.15" height="2.3" fill="#d4fbff"/><rect x="389.65" y="60.05" width="4.15" height="2.3" fill="#d4fbff"/><rect x="379.25" y="63.25" width="4.15" height="2.3" fill="#fff"/><rect x="384.45" y="63.25" width="4.15" height="2.3" fill="#fff"/><rect x="389.65" y="63.25" width="4.15" height="2.3" fill="#fff"/><rect x="379.25" y="66.45" width="4.15" height="2.3" fill="#d4fbff"/><rect x="384.45" y="66.45" width="4.15" height="2.3" fill="#d4fbff"/><rect x="389.65" y="66.45" width="4.15" height="2.3" fill="#d4fbff"/><rect x="379.25" y="69.65" width="4.15" height="2.3" fill="#fff"/><rect x="384.45" y="69.65" width="4.15" height="2.3" fill="#fff"/><rect x="389.65" y="69.65" width="4.15" height="2.3" fill="#fff"/><rect x="379.25" y="72.85" width="4.15" height="2.3" fill="#d4fbff"/><rect x="384.45" y="72.85" width="4.15" height="2.3" fill="#d4fbff"/><rect x="389.65" y="72.85" width="4.15" height="2.3" fill="#d4fbff"/><rect x="379.25" y="76.05" width="4.15" height="2.3" fill="#fff"/><rect x="384.45" y="76.05" width="4.15" height="2.3" fill="#fff"/><rect x="389.65" y="76.05" width="4.15" height="2.3" fill="#fff"/><rect x="379.25" y="79.25" width="4.15" height="2.3" fill="#d4fbff"/><rect x="384.45" y="79.25" width="4.15" height="2.3" fill="#d4fbff"/><rect x="389.65" y="79.25" width="4.15" height="2.3" fill="#d4fbff"/><rect x="378.4" y="51.4" width="16.2" height="30.80" fill="none" stroke="#123c7c" stroke-width=".9"/>
<rect x="363" y="59.2" width="17.500" height="4.200" rx="1.600" fill="#d83a44"/><rect x="363.600" y="61.800000000000004" width="16.500" height="1.500" rx=".7" fill="#9c1c24" opacity=".8"/><path d="M364.800 61.300000000000004h9M376 61.300000000000004h2" stroke="#fff" stroke-width=".7" opacity=".75"/>
<rect x="363" y="66.2" width="17.500" height="4.200" rx="1.600" fill="#5cd448"/><rect x="363.600" y="68.8" width="16.500" height="1.500" rx=".7" fill="#2a9c22" opacity=".8"/><path d="M364.800 68.3h9M376 68.3h2" stroke="#fff" stroke-width=".7" opacity=".75"/>
<rect x="363" y="74.2" width="17.500" height="4.200" rx="1.600" fill="#3c58d8"/><rect x="363.600" y="76.8" width="16.500" height="1.500" rx=".7" fill="#2434a4" opacity=".8"/><path d="M364.800 76.3h9M376 76.3h2" stroke="#fff" stroke-width=".7" opacity=".75"/>

<g fill="url(#bin)">
<path d="M420.100 52.600H426.400V57H426.900V63.500L427.200 70.500H428.500V77.200Q428.500 78.200 427.500 78.200H417.100Q416.100 78.200 416.100 77.200V70.500H417.300L417 63.500V57.800L420.100 56.900Z"/>
<path d="M432 52.600H438.600V56.900L441 57.800V63.500L441.600 70.500H442.600V77.400Q442.600 78.400 441.600 78.400H431.200Q430.200 78.400 430.200 77.400V70.500H430.900L431.100 63.500V57H432Z"/>
</g>
<rect x="426.600" y="57.200" width="4.800" height="6.300" fill="#9c9a98"/>
<path d="M417.200 63.500h9.800M416.300 70.500h12M431 63.500h10.200M430.300 70.500h12.200" stroke="#858381" stroke-width=".7"/>
<path d="M420.300 56.900h6M432.200 56.900h6.300" stroke="#858381" stroke-width=".6"/>

<rect x="463.4" y="51" width="28.6" height="29.5" fill="#8a95aa"/><rect x="463.4" y="51" width="28.6" height="5.0" fill="url(#gh)"/><path d="M464.6 52.3h5.2l-2.600 2.800z" fill="#f4f8ff"/><path d="M471.8 52.3h5.2l-2.600 2.800z" fill="#f4f8ff"/><rect x="470.4" y="51" width=".8" height="5.0" fill="#3c5cae"/><path d="M478.8 52.3h5.2l-2.600 2.800z" fill="#f4f8ff"/><rect x="477.5" y="51" width=".8" height="5.0" fill="#3c5cae"/><path d="M485.9 52.3h5.2l-2.600 2.800z" fill="#f4f8ff"/><rect x="484.6" y="51" width=".8" height="5.0" fill="#3c5cae"/><rect x="464.20" y="56.45" width="6.05" height="3.90" fill="#fff"/><rect x="471.30" y="56.45" width="6.05" height="3.90" fill="#fff"/><rect x="478.40" y="56.45" width="6.05" height="3.90" fill="#fff"/><rect x="485.50" y="56.45" width="6.05" height="3.90" fill="#fff"/><rect x="464.20" y="61.35" width="6.05" height="3.90" fill="#fff"/><rect x="471.30" y="61.35" width="6.05" height="3.90" fill="#fff"/><rect x="478.40" y="61.35" width="6.05" height="3.90" fill="#fff"/><rect x="485.50" y="61.35" width="6.05" height="3.90" fill="#fff"/><rect x="464.20" y="66.25" width="6.05" height="3.90" fill="#fff"/><rect x="471.30" y="66.25" width="6.05" height="3.90" fill="#fff"/><rect x="478.40" y="66.25" width="6.05" height="3.90" fill="#fff"/><rect x="485.50" y="66.25" width="6.05" height="3.90" fill="#fff"/><rect x="464.20" y="71.15" width="6.05" height="3.90" fill="#fff"/><rect x="471.30" y="71.15" width="6.05" height="3.90" fill="#fff"/><rect x="478.40" y="71.15" width="6.05" height="3.90" fill="#fff"/><rect x="485.50" y="71.15" width="6.05" height="3.90" fill="#fff"/><rect x="464.20" y="76.05" width="6.05" height="3.90" fill="#fff"/><rect x="471.30" y="76.05" width="6.05" height="3.90" fill="#fff"/><rect x="478.40" y="76.05" width="6.05" height="3.90" fill="#fff"/><rect x="485.50" y="76.05" width="6.05" height="3.90" fill="#fff"/><path d="M463.8 51V80.3H491.7V51" fill="none" stroke="#3c557e" stroke-width="1"/>
<g stroke="#f0503c" stroke-width="2.700" stroke-linecap="round"><path d="M464.800 63.200h12.800M468 57.600l6.400 11.200M474.400 57.600l-6.400 11.200"/></g>
<path d="M480.400 64.600H489.800L487.800 67Q491.400 72.500 487.600 80.500L485.500 82.400L486.400 80.400Q487.800 74.500 484.200 70.600L480.400 74.200Z" fill="#6ee24a" stroke="#1c9020" stroke-width=".8" stroke-linejoin="round"/>
<rect x="503.3" y="51" width="28.6" height="29.5" fill="#8a95aa"/><rect x="503.3" y="51" width="28.6" height="5.0" fill="url(#gh)"/><path d="M504.6 52.3h5.2l-2.600 2.800z" fill="#f4f8ff"/><path d="M511.6 52.3h5.2l-2.600 2.800z" fill="#f4f8ff"/><rect x="510.3" y="51" width=".8" height="5.0" fill="#3c5cae"/><path d="M518.8 52.3h5.2l-2.600 2.800z" fill="#f4f8ff"/><rect x="517.4" y="51" width=".8" height="5.0" fill="#3c5cae"/><path d="M525.8 52.3h5.2l-2.600 2.800z" fill="#f4f8ff"/><rect x="524.5" y="51" width=".8" height="5.0" fill="#3c5cae"/><rect x="504.10" y="56.45" width="6.05" height="3.90" fill="#fff"/><rect x="511.20" y="56.45" width="6.05" height="3.90" fill="#fff"/><rect x="518.30" y="56.45" width="6.05" height="3.90" fill="#fff"/><rect x="525.40" y="56.45" width="6.05" height="3.90" fill="#fff"/><rect x="504.10" y="61.35" width="6.05" height="3.90" fill="#fff"/><rect x="511.20" y="61.35" width="6.05" height="3.90" fill="#fff"/><rect x="518.30" y="61.35" width="6.05" height="3.90" fill="#fff"/><rect x="525.40" y="61.35" width="6.05" height="3.90" fill="#fff"/><rect x="504.10" y="66.25" width="6.05" height="3.90" fill="#fff"/><rect x="511.20" y="66.25" width="6.05" height="3.90" fill="#fff"/><rect x="518.30" y="66.25" width="6.05" height="3.90" fill="#fff"/><rect x="525.40" y="66.25" width="6.05" height="3.90" fill="#fff"/><rect x="504.10" y="71.15" width="6.05" height="3.90" fill="#fff"/><rect x="511.20" y="71.15" width="6.05" height="3.90" fill="#fff"/><rect x="518.30" y="71.15" width="6.05" height="3.90" fill="#fff"/><rect x="525.40" y="71.15" width="6.05" height="3.90" fill="#fff"/><rect x="504.10" y="76.05" width="6.05" height="3.90" fill="#fff"/><rect x="511.20" y="76.05" width="6.05" height="3.90" fill="#fff"/><rect x="518.30" y="76.05" width="6.05" height="3.90" fill="#fff"/><rect x="525.40" y="76.05" width="6.05" height="3.90" fill="#fff"/><path d="M503.7 51V80.3H531.6V51" fill="none" stroke="#3c557e" stroke-width="1"/>
<path d="M511.200 61.800L520.800 71.400H511.200Z" fill="#3c6cd8" stroke="#1c3c9c" stroke-width=".8" stroke-linejoin="round"/>
<circle cx="514.300" cy="68.400" r="1.100" fill="#e8f0ff"/>
<path d="M518.400 69.600L526.200 61.800L527.800 63.400L520 71.200Z" fill="#f0c860" stroke="#2a2a2a" stroke-width=".5"/>
<path d="M525.400 62.600L526.600 61.400Q527.400 60.800 528.100 61.600Q528.800 62.400 528.200 63.100L527 64.200Z" fill="#e88a80"/>
<path d="M517.800 71.800L518.400 69.600L520 71.200Z" fill="#1a1a1a"/>
<rect x="512" y="72.200" width="15.200" height="3.400" rx=".6" fill="#f2c02a" stroke="#a87810" stroke-width=".7"/>
<path d="M514 72.400v1.400M516 72.400v1.400M518 72.400v1.400M520 72.400v1.400M522 72.400v1.400M524 72.400v1.400" stroke="#8a6410" stroke-width=".5"/>
<rect x="554" y="51.8" width="30" height="15.20" fill="#1a5098"/><rect x="554.8" y="52.6" width="28.4" height="4.4" fill="url(#bh)"/><rect x="555.25" y="57.85" width="3.72" height="2.1" fill="#fff"/><rect x="560.02" y="57.85" width="3.72" height="2.1" fill="#fff"/><rect x="564.78" y="57.85" width="3.72" height="2.1" fill="#fff"/><rect x="569.55" y="57.85" width="3.72" height="2.1" fill="#fff"/><rect x="574.32" y="57.85" width="3.72" height="2.1" fill="#fff"/><rect x="579.08" y="57.85" width="3.72" height="2.1" fill="#fff"/><rect x="555.25" y="60.85" width="3.72" height="2.1" fill="#d4fbff"/><rect x="560.02" y="60.85" width="3.72" height="2.1" fill="#d4fbff"/><rect x="564.78" y="60.85" width="3.72" height="2.1" fill="#d4fbff"/><rect x="569.55" y="60.85" width="3.72" height="2.1" fill="#d4fbff"/><rect x="574.32" y="60.85" width="3.72" height="2.1" fill="#d4fbff"/><rect x="579.08" y="60.85" width="3.72" height="2.1" fill="#d4fbff"/><rect x="555.25" y="63.85" width="3.72" height="2.1" fill="#fff"/><rect x="560.02" y="63.85" width="3.72" height="2.1" fill="#fff"/><rect x="564.78" y="63.85" width="3.72" height="2.1" fill="#fff"/><rect x="569.55" y="63.85" width="3.72" height="2.1" fill="#fff"/><rect x="574.32" y="63.85" width="3.72" height="2.1" fill="#fff"/><rect x="579.08" y="63.85" width="3.72" height="2.1" fill="#fff"/><rect x="554.4" y="52.2" width="29.2" height="14.40" fill="none" stroke="#123c7c" stroke-width=".9"/>
<rect x="554" y="68" width="30" height="15.20" fill="#1a5098"/><rect x="554.8" y="68.8" width="28.4" height="4.4" fill="url(#bh)"/><rect x="555.25" y="74.05" width="3.72" height="2.1" fill="#fff"/><rect x="560.02" y="74.05" width="3.72" height="2.1" fill="#fff"/><rect x="564.78" y="74.05" width="3.72" height="2.1" fill="#fff"/><rect x="569.55" y="74.05" width="3.72" height="2.1" fill="#fff"/><rect x="574.32" y="74.05" width="3.72" height="2.1" fill="#fff"/><rect x="579.08" y="74.05" width="3.72" height="2.1" fill="#fff"/><rect x="555.25" y="77.05" width="3.72" height="2.1" fill="#d4fbff"/><rect x="560.02" y="77.05" width="3.72" height="2.1" fill="#d4fbff"/><rect x="564.78" y="77.05" width="3.72" height="2.1" fill="#d4fbff"/><rect x="569.55" y="77.05" width="3.72" height="2.1" fill="#d4fbff"/><rect x="574.32" y="77.05" width="3.72" height="2.1" fill="#d4fbff"/><rect x="579.08" y="77.05" width="3.72" height="2.1" fill="#d4fbff"/><rect x="555.25" y="80.05" width="3.72" height="2.1" fill="#fff"/><rect x="560.02" y="80.05" width="3.72" height="2.1" fill="#fff"/><rect x="564.78" y="80.05" width="3.72" height="2.1" fill="#fff"/><rect x="569.55" y="80.05" width="3.72" height="2.1" fill="#fff"/><rect x="574.32" y="80.05" width="3.72" height="2.1" fill="#fff"/><rect x="579.08" y="80.05" width="3.72" height="2.1" fill="#fff"/><rect x="554.4" y="68.4" width="29.2" height="14.40" fill="none" stroke="#123c7c" stroke-width=".9"/>

<path d="M608.200 51.200h1.800v9.600h-1.800z" fill="#6a9cc4"/>
<path d="M599 54.600L619.400 59.400V62L599 57.200Z" fill="#6a9cc4"/>
<path d="M600.200 57L594 68.800M600.200 57L606.600 68.800M616.800 62L609 77M616.800 62L623.600 77" stroke="#5a88b4" stroke-width=".9" fill="none"/>
<ellipse cx="600.200" cy="69.600" rx="6.800" ry="3.800" fill="url(#pan)" stroke="#7eaedc" stroke-width=".6"/>
<path d="M593.600 69.200Q600.200 71.400 606.800 69.200" stroke="#1a64c0" stroke-width="1.200" fill="none"/>
<ellipse cx="616.300" cy="78" rx="7.600" ry="4.400" fill="url(#pan)" stroke="#7eaedc" stroke-width=".6"/>
<path d="M609 77.600Q616.300 80.400 623.600 77.600" stroke="#1650b4" stroke-width="1.600" fill="none"/>

<rect x="633.4" y="52" width="28.6" height="29.5" fill="#8a95aa"/><rect x="633.4" y="52" width="28.6" height="5.0" fill="url(#gh)"/><path d="M634.6 53.3h5.2l-2.600 2.800z" fill="#f4f8ff"/><path d="M641.7 53.3h5.2l-2.600 2.800z" fill="#f4f8ff"/><rect x="640.4" y="52" width=".8" height="5.0" fill="#3c5cae"/><path d="M648.8 53.3h5.2l-2.600 2.800z" fill="#f4f8ff"/><rect x="647.5" y="52" width=".8" height="5.0" fill="#3c5cae"/><path d="M655.9 53.3h5.2l-2.600 2.800z" fill="#f4f8ff"/><rect x="654.6" y="52" width=".8" height="5.0" fill="#3c5cae"/><rect x="634.20" y="57.45" width="6.05" height="3.90" fill="#fff"/><rect x="641.30" y="57.45" width="6.05" height="3.90" fill="#fff"/><rect x="648.40" y="57.45" width="6.05" height="3.90" fill="#fff"/><rect x="655.50" y="57.45" width="6.05" height="3.90" fill="#fff"/><rect x="634.20" y="62.35" width="6.05" height="3.90" fill="#f6cc1c"/><rect x="641.30" y="62.35" width="6.05" height="3.90" fill="#f6cc1c"/><rect x="648.40" y="62.35" width="6.05" height="3.90" fill="#f6cc1c"/><rect x="655.50" y="62.35" width="6.05" height="3.90" fill="#f6cc1c"/><rect x="634.20" y="67.25" width="6.05" height="3.90" fill="#f6cc1c"/><rect x="641.30" y="67.25" width="6.05" height="3.90" fill="#f6cc1c"/><rect x="648.40" y="67.25" width="6.05" height="3.90" fill="#f6cc1c"/><rect x="655.50" y="67.25" width="6.05" height="3.90" fill="#f6cc1c"/><rect x="634.20" y="72.15" width="6.05" height="3.90" fill="#fff"/><rect x="641.30" y="72.15" width="6.05" height="3.90" fill="#fff"/><rect x="648.40" y="72.15" width="6.05" height="3.90" fill="#fff"/><rect x="655.50" y="72.15" width="6.05" height="3.90" fill="#fff"/><rect x="634.20" y="77.05" width="6.05" height="3.90" fill="#fff"/><rect x="641.30" y="77.05" width="6.05" height="3.90" fill="#fff"/><rect x="648.40" y="77.05" width="6.05" height="3.90" fill="#fff"/><rect x="655.50" y="77.05" width="6.05" height="3.90" fill="#fff"/><rect x="633.9" y="62.1" width="27.800" height="4.4" fill="#f4c81a" opacity=".55"/><rect x="633.9" y="67.0" width="27.800" height="4.4" fill="#f4c81a" opacity=".55"/><path d="M633.8 52V81.3H661.7V52" fill="none" stroke="#3c557e" stroke-width="1"/>

<rect x="699.800" y="51.700" width="14.400" height="12.600" fill="url(#boxg)" stroke="#b4bece" stroke-width=".8"/>
<path d="M700.200 64.200H714.200V52" fill="none" stroke="#1c3050" stroke-width="1.400"/>
<rect x="683.800" y="69.800" width="14.600" height="12.600" fill="url(#boxg)" stroke="#b4bece" stroke-width=".8"/>
<path d="M684.200 82.300H698.400V70.100" fill="none" stroke="#1c3050" stroke-width="1.400"/>
<path d="M703.200 62L706.400 53.400H708.600L711.800 62H709.600L709 60.200H706L705.400 62ZM706.600 58.400H708.400L707.500 55.600Z" fill="#d80c50" stroke="#d80c50" stroke-width=".5"/>
<path d="M688.400 74L691.600 71.600H693.200V80.400H691V74.200L688.400 75.800Z" fill="#d80c50" stroke="#d80c50" stroke-width=".4"/>
<path d="M708.200 81.600V78.600Q708 77.300 703.800 77.300V79.200L700.500 75.900L703.800 72.600V74.500Q708.200 74.300 708.200 71V69.900H706L709.900 66.200L714 69.900H711.800V81.600Z" fill="#d890dc" stroke="#a23caa" stroke-width=".8" stroke-linejoin="round"/>


<circle cx="743.300" cy="71.400" r="10" fill="url(#venb)" stroke="#7a90b4" stroke-width=".9"/>
<circle cx="733.400" cy="62.400" r="10" fill="url(#venw)" fill-opacity=".88" stroke="#7a8698" stroke-width=".9"/>
<circle cx="743.300" cy="71.400" r="10" fill="none" stroke="#6c7c98" stroke-width=".9"/>


<circle cx="783.800" cy="71.400" r="10.300" fill="#a3a2a2"/>
<circle cx="774.400" cy="62.300" r="10.400" fill="#a3a2a2"/>
<path d="M778 72.500A10.400 10.400 0 0 0 784.600 64" fill="none" stroke="#9a9999" stroke-width=".7"/>
<path d="M773.600 69A10.300 10.300 0 0 1 781.500 61.400" fill="none" stroke="#aeadad" stroke-width=".7"/>


<text x="815" y="65.700" font-family="Liberation Sans, sans-serif" font-weight="bold" font-size="12.4" fill="#6c6c6c" textLength="26" lengthAdjust="spacingAndGlyphs">ABC</text>
<path d="M814 69.300l1.300-.9 1.300.900 1.300-.9 1.300.900 1.300-.9 1.300.900 1.300-.9 1.300.900 1.300-.9 1.300.900 1.300-.9 1.300.900" fill="none" stroke="#d82010" stroke-width=".9"/>
<circle cx="836" cy="71.600" r="8" fill="url(#chk)" stroke="#a8e09c" stroke-width=".8"/>
<path d="M829.200 69.500A7 7 0 0 1 842.800 69.500Q836 66.500 829.200 69.500Z" fill="#b4e4a8" opacity=".55"/>
<path d="M831.200 71.200L834.900 75L841.200 67.800" fill="none" stroke="#fff" stroke-width="1.900"/>

<text x="12.0" y="730" font-size="12.5" fill="#0c0c0c" font-weight="bold" textLength="57.10" lengthAdjust="spacing">Data View</text>
<text x="81.0" y="728" font-size="12.5" fill="#0a1430" textLength="75.20" lengthAdjust="spacing">Variable View</text>
<text x="1004.4" y="762" font-size="12.5" fill="#0a0a20" textLength="214.90" lengthAdjust="spacing">IBM SPSS Statistics Processor is ready</text>
<rect x="6.70" y="40" width="7.64" height="1" fill="#101018"/><rect x="43.60" y="40" width="8.34" height="1" fill="#101018"/><rect x="80.20" y="40" width="8.12" height="1" fill="#101018"/><rect x="123.50" y="40" width="9.03" height="1" fill="#101018"/><rect x="166.60" y="40" width="7.17" height="1" fill="#101018"/><rect x="239.50" y="40" width="8.34" height="1" fill="#101018"/><rect x="331.53" y="40" width="10.42" height="1" fill="#101018"/><rect x="401.30" y="40" width="9.73" height="1" fill="#101018"/><rect x="458.50" y="40" width="9.03" height="1" fill="#101018"/><rect x="541.57" y="40" width="6.95" height="1" fill="#101018"/><rect x="578.00" y="40" width="11.81" height="1" fill="#101018"/><rect x="639.70" y="40" width="9.03" height="1" fill="#101018"/>
</svg>
</body></html>
